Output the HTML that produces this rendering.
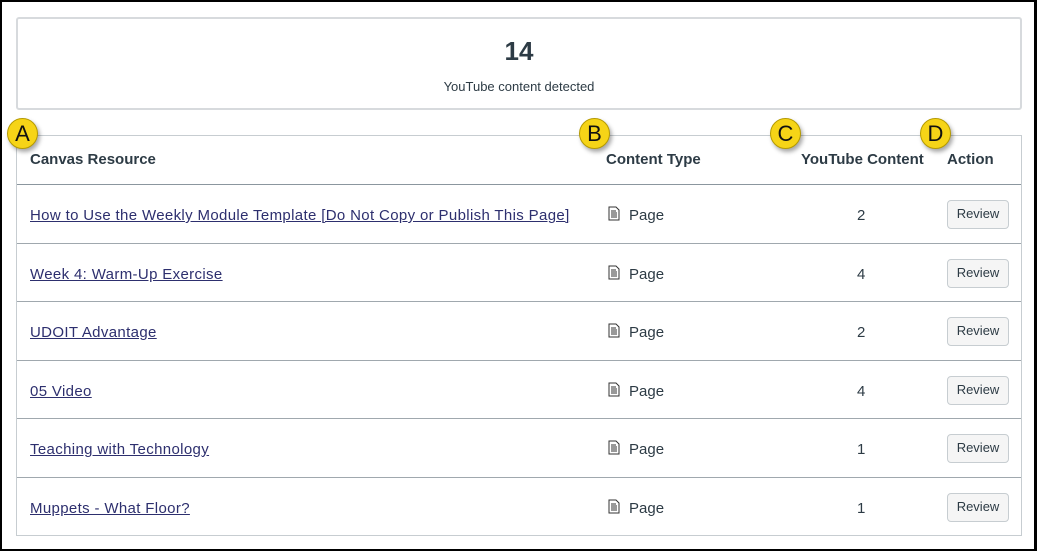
<!DOCTYPE html>
<html><head><style>
*{margin:0;padding:0;box-sizing:border-box}
body{width:1037px;height:551px;background:#fff;font-family:"Liberation Sans",sans-serif;color:#2d3b45;position:relative;overflow:hidden}
.frame{position:absolute;left:0;top:0;width:1037px;height:551px;border:2px solid #000;border-right-width:3px}
.sum{position:absolute;left:16px;top:17px;width:1006px;height:93px;border:2px solid #d7dadd;border-radius:3px;text-align:center}
.sum .n{font-size:26px;font-weight:bold;margin-top:17px;color:#2d3b45}
.sum .l{font-size:13px;margin-top:12px}
.tbl{position:absolute;left:16px;top:135px;width:1006px;height:401px;border:1px solid #c7cdd1}
.hd{position:absolute;top:0;left:0;right:0;height:49px;border-bottom:1px solid #8b969e;font-weight:bold;font-size:15px}
.hd span,.row span{position:absolute}
.row{position:absolute;left:0;right:0;height:58.5px;border-bottom:1px solid #a0a8ae;font-size:15px}
a{color:#2d2f6e;text-decoration:underline;letter-spacing:0.35px}
.btn{position:absolute;left:930px;top:15px;width:62px;height:29px;border:1px solid #c7cdd1;border-radius:4px;background:#f5f5f5;font-size:13px;text-align:center;line-height:26px}
.ic{position:absolute;left:591px;top:21px;width:12px;height:15px}
.b{position:absolute;width:31px;height:31px;border-radius:50%;background:#f6d417;border:1px solid #b59a00;box-shadow:2px 3px 4px rgba(0,0,0,.35);font-size:22px;text-align:center;line-height:30px;color:#111}
.row span{top:22px}
</style></head><body>
<div class="frame"></div>
<div class="sum"><div class="n">14</div><div class="l">YouTube content detected</div></div>
<div class="tbl">
<div class="hd"><span style="left:13px;top:15px">Canvas Resource</span><span style="left:589px;top:15px">Content Type</span><span style="left:784px;top:15px">YouTube Content</span><span style="left:930px;top:15px">Action</span></div>
<div style="position:absolute;top:49px;left:0;right:0">
<div class="row" style="top:0"><span style="left:13px"><a>How to Use the Weekly Module Template [Do Not Copy or Publish This Page]</a></span><svg class="ic" viewBox="0 0 12 15"><path d="M1 1h7l3 3v10H1z" fill="none" stroke="#333"/><path d="M3 5h5M3 7h6M3 9h6M3 11h6" stroke="#333"/></svg><span style="left:612px">Page</span><span style="left:840px">2</span><div class="btn">Review</div></div>
<div class="row" style="top:58.5px"><span style="left:13px"><a>Week 4: Warm-Up Exercise</a></span><svg class="ic" viewBox="0 0 12 15"><path d="M1 1h7l3 3v10H1z" fill="none" stroke="#333"/><path d="M3 5h5M3 7h6M3 9h6M3 11h6" stroke="#333"/></svg><span style="left:612px">Page</span><span style="left:840px">4</span><div class="btn">Review</div></div>
<div class="row" style="top:117px"><span style="left:13px"><a>UDOIT Advantage</a></span><svg class="ic" viewBox="0 0 12 15"><path d="M1 1h7l3 3v10H1z" fill="none" stroke="#333"/><path d="M3 5h5M3 7h6M3 9h6M3 11h6" stroke="#333"/></svg><span style="left:612px">Page</span><span style="left:840px">2</span><div class="btn">Review</div></div>
<div class="row" style="top:175.5px"><span style="left:13px"><a>05 Video</a></span><svg class="ic" viewBox="0 0 12 15"><path d="M1 1h7l3 3v10H1z" fill="none" stroke="#333"/><path d="M3 5h5M3 7h6M3 9h6M3 11h6" stroke="#333"/></svg><span style="left:612px">Page</span><span style="left:840px">4</span><div class="btn">Review</div></div>
<div class="row" style="top:234px"><span style="left:13px"><a>Teaching with Technology</a></span><svg class="ic" viewBox="0 0 12 15"><path d="M1 1h7l3 3v10H1z" fill="none" stroke="#333"/><path d="M3 5h5M3 7h6M3 9h6M3 11h6" stroke="#333"/></svg><span style="left:612px">Page</span><span style="left:840px">1</span><div class="btn">Review</div></div>
<div class="row" style="top:292.5px;border-bottom:none"><span style="left:13px"><a>Muppets - What Floor?</a></span><svg class="ic" viewBox="0 0 12 15"><path d="M1 1h7l3 3v10H1z" fill="none" stroke="#333"/><path d="M3 5h5M3 7h6M3 9h6M3 11h6" stroke="#333"/></svg><span style="left:612px">Page</span><span style="left:840px">1</span><div class="btn">Review</div></div>
</div></div>
<div class="b" style="left:7px;top:118px">A</div>
<div class="b" style="left:579px;top:118px">B</div>
<div class="b" style="left:770px;top:118px">C</div>
<div class="b" style="left:920px;top:118px">D</div>
</body></html>
